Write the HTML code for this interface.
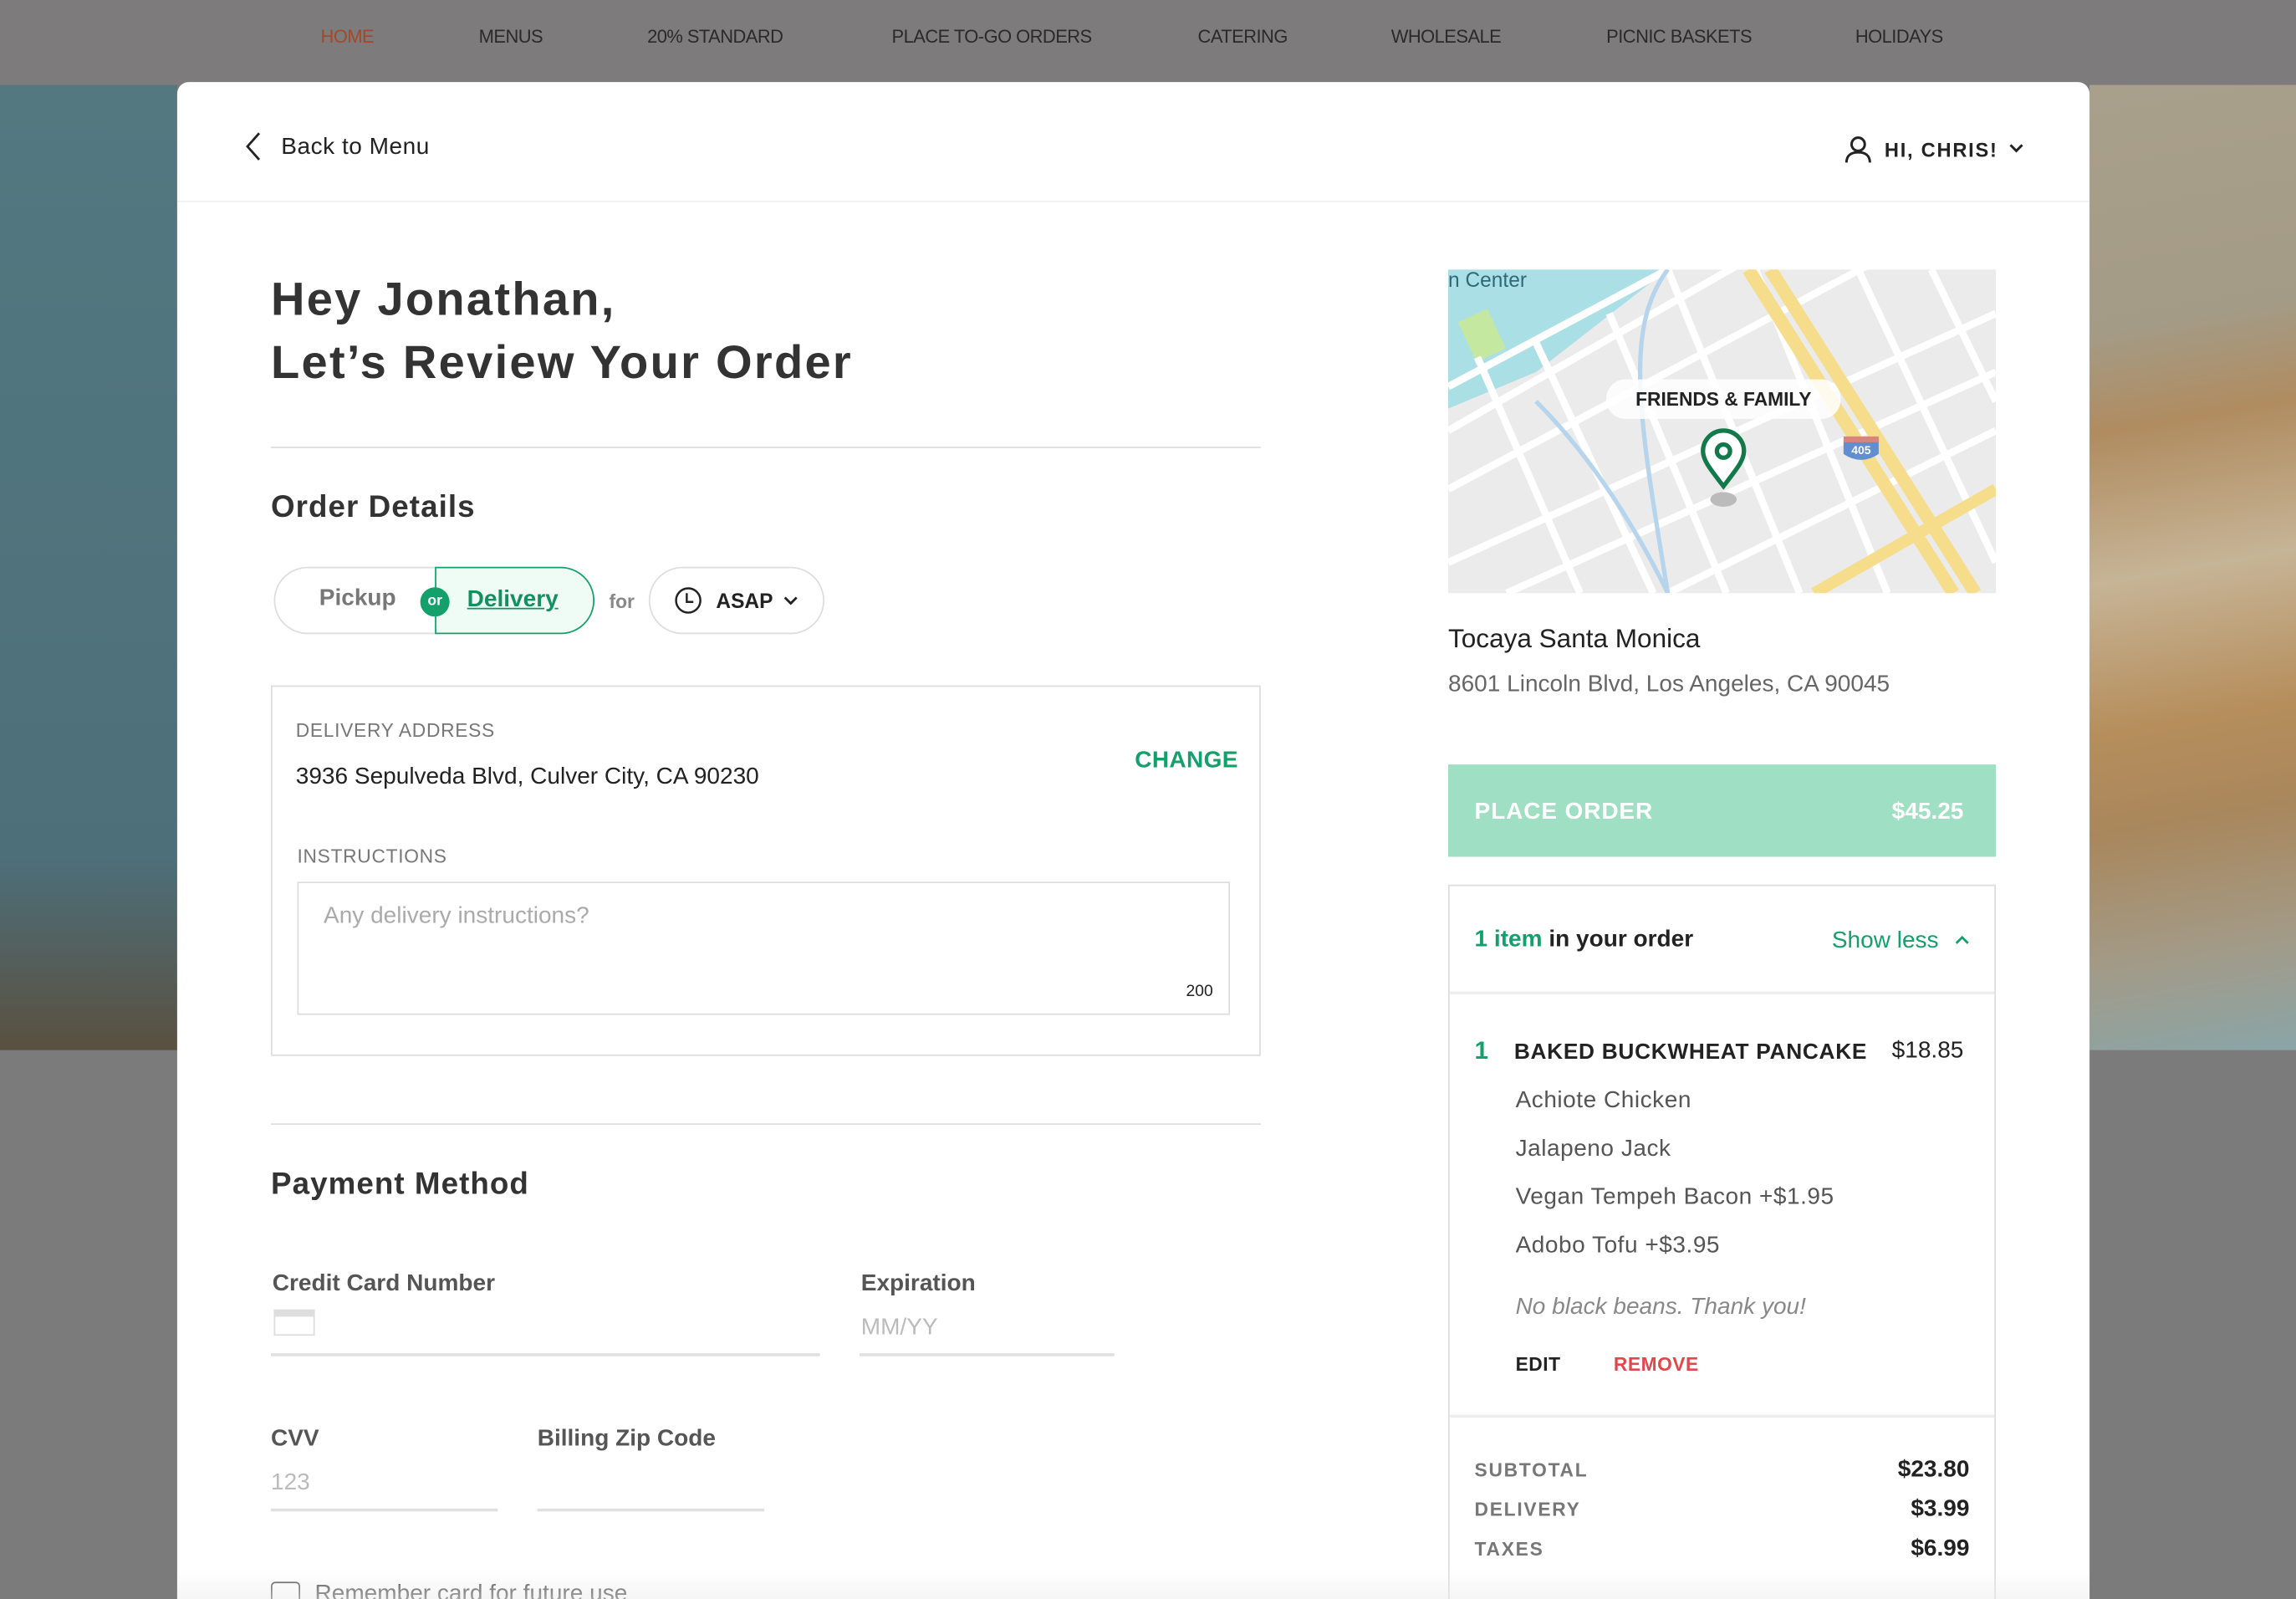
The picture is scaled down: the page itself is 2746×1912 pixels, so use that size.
<!DOCTYPE html>
<html><head><meta charset="utf-8"><style>
*{box-sizing:border-box;margin:0;padding:0}
html,body{width:2746px;height:1912px;overflow:hidden;background:#777}
#s{position:absolute;left:0;top:0;width:1568px;height:1092px;transform:scale(1.75128);transform-origin:0 0;font-family:"Liberation Sans",sans-serif;background:#7b7b7b;overflow:hidden}
.a{position:absolute;white-space:nowrap}
.nav{left:0;top:0;width:1568px;height:58px;background:#7d7b7c}
.nav span{position:absolute;top:18px;font-size:12.5px;color:#2a2a2a;letter-spacing:-.3px}
.m{left:121px;top:56px;width:1306px;height:1040px;background:#fff;border-radius:8px 8px 0 0;overflow:hidden}
.h{font-weight:bold;color:#333}
.lab{font-size:13px;color:#777;letter-spacing:.4px}
.g{color:#14a06b}
.line{position:absolute;height:2px;background:#e0e0e0}
</style></head><body><div id="s">
<div class="a nav">
<span style="left:219px;color:#a2492b">HOME</span><span style="left:327px">MENUS</span><span style="left:442px">20% STANDARD</span><span style="left:609px">PLACE TO-GO ORDERS</span><span style="left:818px">CATERING</span><span style="left:950px">WHOLESALE</span><span style="left:1097px">PICNIC BASKETS</span><span style="left:1267px">HOLIDAYS</span>
</div>
<div class="a" style="left:0;top:58px;width:121px;height:659px;background:linear-gradient(180deg,#537880,#4d6f7a 80%,#5a5040)"></div>
<div class="a" style="left:1427px;top:58px;width:141px;height:659px;background:linear-gradient(170deg,#a9a08c 0%,#a49b86 25%,#b08c60 35%,#c6b496 50%,#b68e5c 65%,#a9875c 75%,#a39a86 88%,#8aa5a8 100%)"></div>
<div class="a m">
<svg class="a" style="left:44px;top:34px" width="16" height="20" viewBox="0 0 16 20"><path d="M12 1 L4 10 L12 19" fill="none" stroke="#222" stroke-width="1.6"/></svg>
<div class="a" style="left:71px;top:36px;font-size:16px;color:#222;letter-spacing:.3px">Back to Menu</div>
<svg class="a" style="left:1138px;top:36px" width="20" height="20" viewBox="0 0 20 20"><circle cx="10" cy="6.5" r="4.5" fill="none" stroke="#222" stroke-width="1.7"/><path d="M2 19c0-5 3.5-7 8-7s8 2 8 7" fill="none" stroke="#222" stroke-width="1.7"/></svg>
<div class="a" style="left:1166px;top:39px;font-size:13.5px;font-weight:bold;color:#222;letter-spacing:1px">HI, CHRIS!</div>
<svg class="a" style="left:1251px;top:41px" width="10" height="8" viewBox="0 0 10 8"><path d="M1 2l4 4 4-4" fill="none" stroke="#222" stroke-width="1.7"/></svg>
<div class="line" style="left:0;top:81px;width:1306px;height:1px;background:#eee"></div>

<div class="a h" style="left:64px;top:127px;font-size:32px;line-height:43px;letter-spacing:1.3px">Hey Jonathan,<br>Let’s Review Your Order</div>
<div class="line" style="left:64px;top:249px;width:676px;height:1px;background:#ddd"></div>
<div class="a h" style="left:64px;top:279px;font-size:21px;letter-spacing:.6px">Order Details</div>
<div class="a" style="left:66px;top:331px;width:219px;height:46px;border:1.5px solid #ddd;border-radius:23px"></div>
<div class="a" style="left:97px;top:344px;font-size:16px;font-weight:bold;color:#777">Pickup</div>
<div class="a" style="left:176px;top:331px;width:109px;height:46px;border:1.5px solid #14a06b;border-radius:0 23px 23px 0;background:#effcf5"></div>
<div class="a" style="left:198px;top:345px;font-size:16px;font-weight:bold;color:#12905f;text-decoration:underline">Delivery</div>
<div class="a" style="left:166px;top:345px;width:20px;height:20px;border-radius:50%;background:#14a06b;color:#fff;font-size:10px;font-weight:bold;text-align:center;line-height:19px">or</div>
<div class="a" style="left:295px;top:347px;font-size:13px;font-weight:bold;color:#888">for</div>
<div class="a" style="left:322px;top:331px;width:120px;height:46px;border:1.5px solid #ddd;border-radius:23px"></div>
<svg class="a" style="left:339px;top:344px" width="20" height="20" viewBox="0 0 20 20"><circle cx="10" cy="10" r="8.3" fill="none" stroke="#222" stroke-width="1.4"/><path d="M9 5v6h4.5" fill="none" stroke="#222" stroke-width="1.4"/></svg>
<div class="a" style="left:368px;top:346px;font-size:14px;font-weight:bold;color:#222">ASAP</div>
<svg class="a" style="left:414px;top:350px" width="10" height="8" viewBox="0 0 10 8"><path d="M1 2l4 4 4-4" fill="none" stroke="#222" stroke-width="1.6"/></svg>

<div class="a" style="left:64px;top:412px;width:676px;height:253px;border:1.5px solid #ddd"></div>
<div class="a lab" style="left:81px;top:435px">DELIVERY ADDRESS</div>
<div class="a" style="left:81px;top:466px;font-size:16px;color:#222">3936 Sepulveda Blvd, Culver City, CA 90230</div>
<div class="a g" style="left:654px;top:455px;font-size:16px;font-weight:bold;letter-spacing:.2px">CHANGE</div>
<div class="a lab" style="left:82px;top:521px">INSTRUCTIONS</div>
<div class="a" style="left:82px;top:546px;width:637px;height:91px;border:1.5px solid #ddd"></div>
<div class="a" style="left:100px;top:561px;font-size:16px;color:#aaa">Any delivery instructions?</div>
<div class="a" style="left:689px;top:615px;font-size:11px;color:#222">200</div>

<div class="line" style="left:64px;top:711px;width:676px;height:1px;background:#ddd"></div>
<div class="a h" style="left:64px;top:741px;font-size:21px;letter-spacing:.6px">Payment Method</div>
<div class="a" style="left:65px;top:812px;font-size:16px;font-weight:bold;color:#555">Credit Card Number</div>
<div class="a" style="left:66px;top:838px;width:28px;height:18px;border:1px solid #ddd;border-top:5px solid #ddd"></div>
<div class="line" style="left:64px;top:868px;width:375px"></div>
<div class="a" style="left:467px;top:812px;font-size:16px;font-weight:bold;color:#555">Expiration</div>
<div class="a" style="left:467px;top:842px;font-size:16px;color:#bbb">MM/YY</div>
<div class="line" style="left:466px;top:868px;width:174px"></div>
<div class="a" style="left:64px;top:918px;font-size:16px;font-weight:bold;color:#555">CVV</div>
<div class="a" style="left:64px;top:948px;font-size:16px;color:#bbb">123</div>
<div class="line" style="left:64px;top:974px;width:155px"></div>
<div class="a" style="left:246px;top:918px;font-size:16px;font-weight:bold;color:#555">Billing Zip Code</div>
<div class="line" style="left:246px;top:974px;width:155px"></div>
<div class="a" style="left:64px;top:1024px;width:20px;height:20px;border:1.5px solid #555;border-radius:3px"></div>
<div class="a" style="left:94px;top:1024px;font-size:16px;color:#555">Remember card for future use</div>

<svg class="a" style="left:868px;top:128px" width="374" height="221" viewBox="0 0 374 221">
<rect width="374" height="221" fill="#ebebeb"/>
<path d="M0 0h150L60 70 0 95z" fill="#aadfe6"/>
<rect x="12" y="30" width="22" height="30" fill="#c5e8a0" transform="rotate(-25 23 45)"/>
<g stroke="#fff" stroke-width="5" fill="none">
<path d="M0 110L210 -10M0 150L300 -10M0 200L374 30M40 221L374 70M150 221L374 110M0 80L150 0"/>
<path d="M20 60L90 221M60 50L140 221M110 30L190 221M150 0L240 221M210 0L300 221M280 0L374 200M330 0L374 90"/>
</g>
<path d="M60 90C100 130 130 180 150 221M150 0C120 40 130 100 150 221" stroke="#b6d5ec" stroke-width="3" fill="none"/>
<path d="M205 0L345 221M220 0L360 221" stroke="#f6dd8c" stroke-width="9"/>
<path d="M250 221L374 150" stroke="#f6dd8c" stroke-width="8"/>
<path d="M270 117h24v9q-12 8-24 0z" fill="#5f8fd0"/><rect x="270" y="114" width="24" height="4" fill="#d9837b"/>
<text x="282" y="126" font-size="8" fill="#fff" text-anchor="middle" font-family="Liberation Sans" font-weight="bold">405</text>
<text x="0" y="12" font-size="14" fill="#2d6a78" font-family="Liberation Sans">n Center</text>
<rect x="108" y="75" width="160" height="27" rx="13" fill="#fff" opacity=".85"/>
<text x="188" y="93" font-size="13" fill="#222" text-anchor="middle" font-family="Liberation Sans" font-weight="bold">FRIENDS &amp; FAMILY</text>
<ellipse cx="188" cy="157" rx="9" ry="5" fill="#bbb"/>
<path d="M188 148C178 135 174 130 174 124a14 14 0 0 1 28 0c0 6-4 11-14 24z" fill="#fff" stroke="#127a4a" stroke-width="3"/>
<circle cx="188" cy="124" r="4.5" fill="none" stroke="#127a4a" stroke-width="3"/>
</svg>
<div class="a" style="left:868px;top:370px;font-size:18px;color:#222">Tocaya Santa Monica</div>
<div class="a" style="left:868px;top:403px;font-size:16px;color:#666">8601 Lincoln Blvd, Los Angeles, CA 90045</div>
<div class="a" style="left:868px;top:466px;width:374px;height:63px;background:#9fdfc3"></div>
<div class="a" style="left:886px;top:490px;font-size:16px;font-weight:bold;color:#fff;letter-spacing:.5px">PLACE ORDER</div>
<div class="a" style="left:1171px;top:490px;font-size:16px;font-weight:bold;color:#fff">$45.25</div>
<div class="a" style="left:868px;top:548px;width:374px;height:500px;border:1.5px solid #ddd"></div>
<div class="line" style="left:869px;top:621px;width:372px;height:1.5px;background:#eee"></div>
<div class="a" style="left:886px;top:577px;font-size:16px;font-weight:bold;color:#222"><span class="g">1 item</span> in your order</div>
<div class="a g" style="left:1130px;top:578px;font-size:16px">Show less</div>
<svg class="a" style="left:1214px;top:582px" width="10" height="8" viewBox="0 0 10 8"><path d="M1 6l4-4 4 4" fill="none" stroke="#14a06b" stroke-width="1.6"/></svg>
<div class="a g" style="left:886px;top:652px;font-size:17px;font-weight:bold">1</div>
<div class="a" style="left:913px;top:654px;font-size:15px;font-weight:bold;color:#222;letter-spacing:.4px">BAKED BUCKWHEAT PANCAKE</div>
<div class="a" style="left:1171px;top:653px;font-size:16px;color:#222">$18.85</div>
<div class="a" style="left:914px;top:679px;font-size:16px;color:#555;line-height:33px;letter-spacing:.3px">Achiote Chicken<br>Jalapeno Jack<br>Vegan Tempeh Bacon +$1.95<br>Adobo Tofu +$3.95</div>
<div class="a" style="left:914px;top:828px;font-size:16px;color:#888;font-style:italic">No black beans. Thank you!</div>
<div class="a" style="left:914px;top:868px;font-size:13px;font-weight:bold;color:#222;letter-spacing:.3px">EDIT</div>
<div class="a" style="left:981px;top:868px;font-size:13px;font-weight:bold;color:#e2474b;letter-spacing:.3px">REMOVE</div>
<div class="line" style="left:869px;top:910px;width:372px;height:1.5px;background:#eee"></div>
<div class="a lab" style="left:886px;top:934px;line-height:27px;font-weight:bold;color:#777;letter-spacing:1px">SUBTOTAL<br>DELIVERY<br>TAXES</div>
<div class="a" style="left:1150px;top:934px;width:74px;text-align:right;font-size:16px;font-weight:bold;color:#222;line-height:27px">$23.80<br>$3.99<br>$6.99</div>
<div class="a" style="left:0;top:1016px;width:1306px;height:24px;background:linear-gradient(rgba(255,255,255,0),rgba(235,235,235,.6))"></div>
</div>
</div></body></html>
